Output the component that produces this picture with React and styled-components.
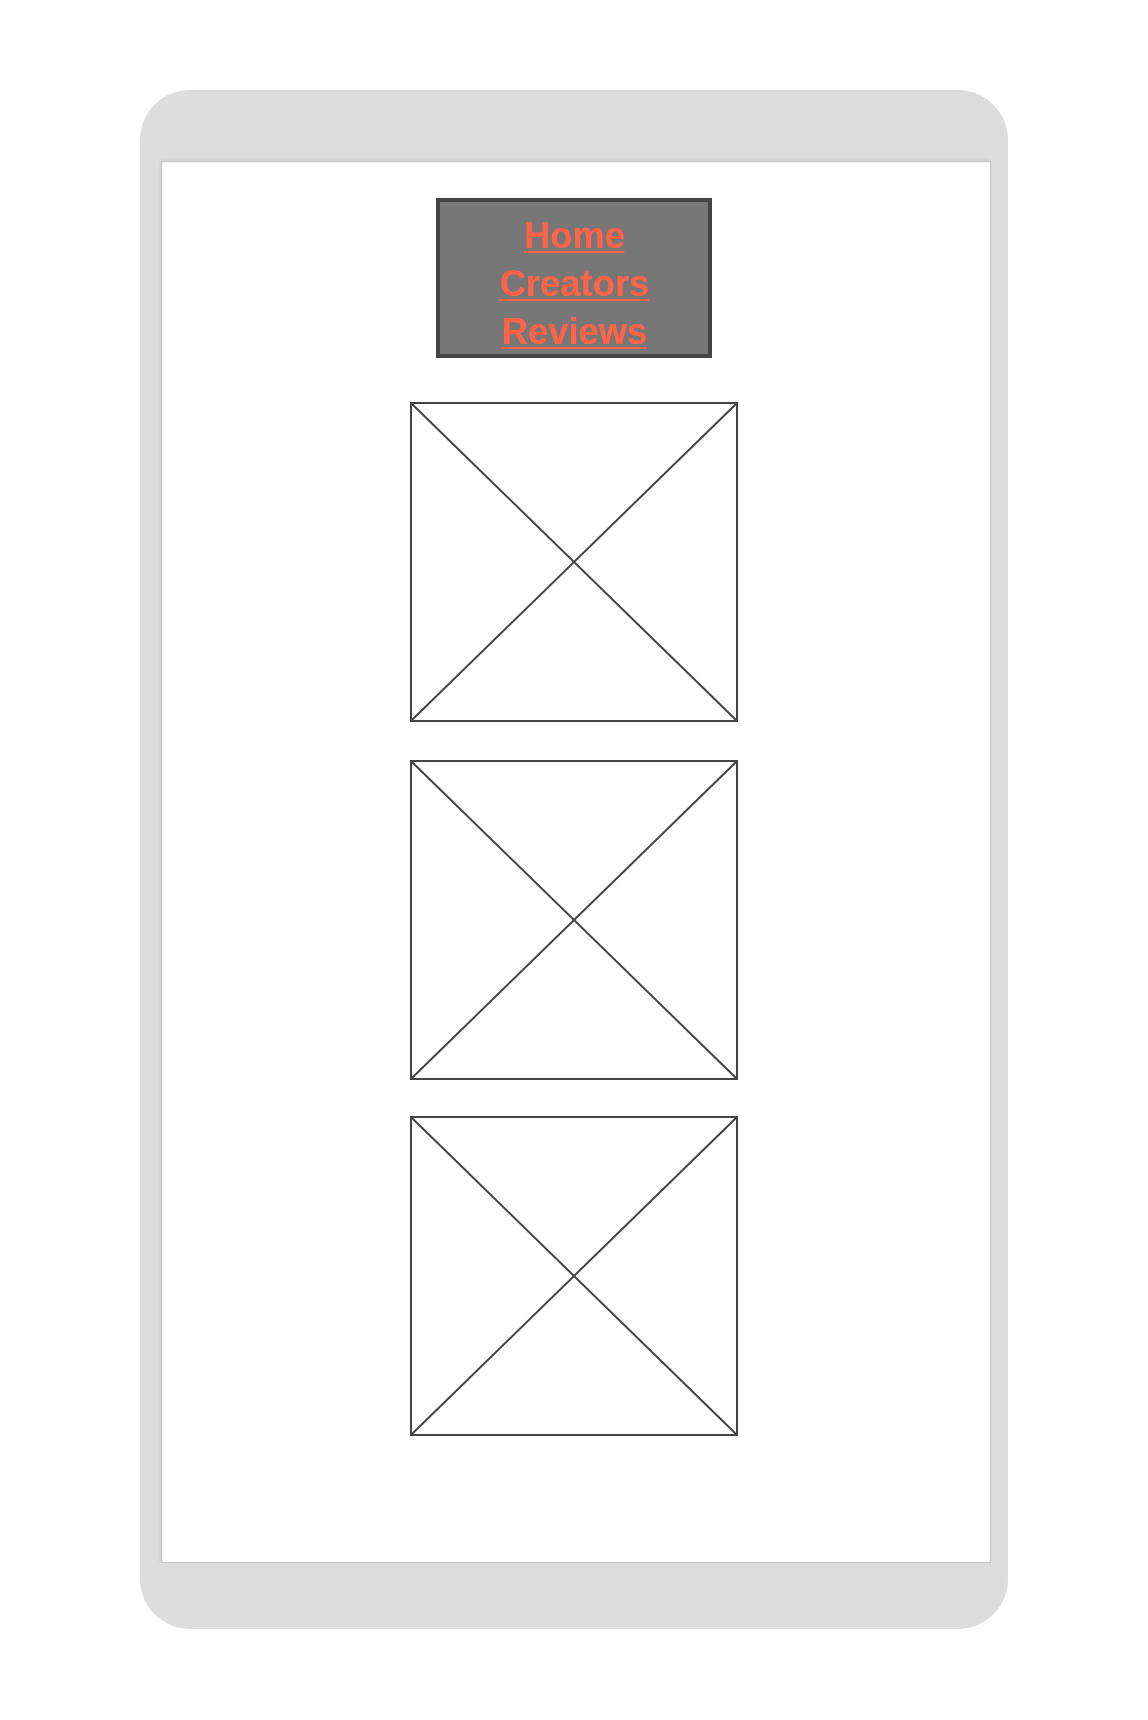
import React from "react";
import styled, { createGlobalStyle } from "styled-components";

const Global = createGlobalStyle`
  html, body { margin: 0; padding: 0; background: #ffffff; }
  body { font-family: "Liberation Sans", Arial, sans-serif; }
`;

const Page = styled.div`
  width: 1148px;
  height: 1720px;
  padding-top: 90px;
  box-sizing: border-box;
  display: flex;
  justify-content: center;
  align-items: flex-start;
`;

const Device = styled.div`
  width: 868px;
  height: 1539px;
  box-sizing: border-box;
  background: #dddddd;
  border-radius: 50px;
  padding: 71px 17px 66px 21px;
  display: flex;
`;

const Screen = styled.div`
  flex: 1;
  background: #ffffff;
  border: 1px solid #c8c8c8;
  box-shadow: inset 1px 1px 2px rgba(0, 0, 0, 0.08), -1px -1px 3px rgba(0, 0, 0, 0.08);
  padding: 36px 4px 0 0;
  display: flex;
  flex-direction: column;
  align-items: center;
`;

const Nav = styled.nav`
  width: 276px;
  height: 160px;
  box-sizing: border-box;
  background: #777777;
  border: 4px solid #444444;
  padding-top: 10px;
  display: flex;
  flex-direction: column;
  align-items: center;
  margin-bottom: 44px;
`;

const NavLink = styled.a`
  display: block;
  font-family: "Liberation Sans", Arial, sans-serif;
  font-weight: bold;
  font-size: 36px;
  line-height: 48px;
  letter-spacing: 0.2px;
  color: tomato;
  text-decoration: underline;
  text-decoration-thickness: 2px;
  text-underline-offset: 3px;
`;

const ImageList = styled.div`
  display: flex;
  flex-direction: column;
  align-items: center;
`;

const Placeholder = styled.div`
  width: 328px;
  height: 320px;
  box-sizing: border-box;
  border: 2px solid #444444;
  background: #ffffff;
  margin-top: ${(p) => p.$gap || 0}px;
  svg {
    display: block;
    width: 100%;
    height: 100%;
  }
`;

const ImagePlaceholder = ({ gap }) => (
  <Placeholder $gap={gap}>
    <svg viewBox="0 0 324 316" preserveAspectRatio="none">
      <line x1="0" y1="0" x2="324" y2="316" stroke="#444" strokeWidth="2" />
      <line x1="324" y1="0" x2="0" y2="316" stroke="#444" strokeWidth="2" />
    </svg>
  </Placeholder>
);

export default function App() {
  return (
    <>
      <Global />
      <Page>
        <Device>
          <Screen>
            <Nav>
              <NavLink href="#">Home</NavLink>
              <NavLink href="#">Creators</NavLink>
              <NavLink href="#">Reviews</NavLink>
            </Nav>
            <ImageList>
              <ImagePlaceholder gap={0} />
              <ImagePlaceholder gap={38} />
              <ImagePlaceholder gap={36} />
            </ImageList>
          </Screen>
        </Device>
      </Page>
    </>
  );
}
